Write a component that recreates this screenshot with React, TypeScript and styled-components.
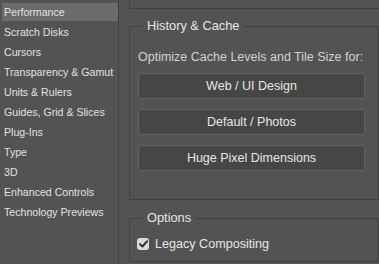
import React from "react";
import styled, { createGlobalStyle } from "styled-components";

const GlobalStyle = createGlobalStyle`
    html, body {
        margin: 0;
        padding: 0;
        background: #535353;
    }
    body {
        font-family: "Liberation Sans", Arial, sans-serif;
        color: #e4e4e4;
        overflow: hidden;
    }
`

const StyledWindow = styled.div`
    display: flex;
    width: 379px;
    height: 264px;
    background: #535353;
    overflow: hidden;
`

const StyledSidebar = styled.ul`
    list-style: none;
    margin: 0;
    padding: 3px 0 0 2px;
    width: 116px;
    border-right: 1px solid #414141;
    display: flex;
    flex-direction: column;
    gap: 2px;
`

const StyledNavItem = styled.li<{ $active?: boolean }>`
    height: 18px;
    line-height: 18px;
    padding-left: 2px;
    font-size: 10.6px;
    color: #e2e2e2;
    white-space: nowrap;
    background: ${(p) => (p.$active ? "#6b6b6b" : "transparent")};
`

const StyledMain = styled.div`
    flex: 1;
    padding-left: 10px;
    display: flex;
    flex-direction: column;
`

const StyledTopBox = styled.div`
    height: 8px;
    border-left: 1px solid #414141;
    border-bottom: 1px solid #414141;
`

const StyledGroup = styled.fieldset<{ $top: number; $bottom: number }>`
    margin: ${(p) => p.$top}px 0 0 0;
    padding: 0 14px ${(p) => p.$bottom}px 8px;
    border: 1px solid #414141;
    min-width: 0;
    width: 250px;
    box-sizing: border-box;
`

const StyledLegend = styled.legend`
    margin-left: 5px;
    padding: 0 4px;
    font-size: 12.8px;
    line-height: 16px;
    color: #e6e6e6;
`

const StyledHint = styled.div`
    margin-top: 15px;
    font-size: 12.5px;
    line-height: 16px;
    color: #d2d2d2;
    white-space: nowrap;
`

const StyledButtons = styled.div`
    margin-top: 8px;
    display: flex;
    flex-direction: column;
    gap: 10px;
`

const StyledButton = styled.button`
    height: 26px;
    width: 227px;
    box-sizing: border-box;
    border: 1px solid #636363;
    border-radius: 3px;
    background: #464646;
    color: #e6e6e6;
    font-family: "Liberation Sans", Arial, sans-serif;
    font-size: 12.5px;
    padding: 0;
`

const StyledCheckRow = styled.label`
    margin-top: 10px;
    margin-left: -1px;
    display: flex;
    align-items: center;
    gap: 6px;
    height: 16px;
    font-size: 12.6px;
    color: #e6e6e6;
`

const StyledCheckBox = styled.span`
    width: 12px;
    height: 12px;
    border-radius: 3px;
    background: #d9d9d9;
    display: flex;
    align-items: center;
    justify-content: center;
`

const navItems: string[] = [
    "Performance",
    "Scratch Disks",
    "Cursors",
    "Transparency & Gamut",
    "Units & Rulers",
    "Guides, Grid & Slices",
    "Plug-Ins",
    "Type",
    "3D",
    "Enhanced Controls",
    "Technology Previews",
];

const presets: string[] = ["Web / UI Design", "Default / Photos", "Huge Pixel Dimensions"];

const App = () => {
    return (
        <StyledWindow>
            <GlobalStyle />
            <StyledSidebar>
                {navItems.map((item, i) => (
                    <StyledNavItem key={item} $active={i === 0}>{item}</StyledNavItem>
                ))}
            </StyledSidebar>
            <StyledMain>
                <StyledTopBox />
                <StyledGroup $top={9} $bottom={28}>
                    <StyledLegend>History &amp; Cache</StyledLegend>
                    <StyledHint>Optimize Cache Levels and Tile Size for:</StyledHint>
                    <StyledButtons>
                        {presets.map((p) => (
                            <StyledButton key={p}>{p}</StyledButton>
                        ))}
                    </StyledButtons>
                </StyledGroup>
                <StyledGroup $top={10} $bottom={9}>
                    <StyledLegend>Options</StyledLegend>
                    <StyledCheckRow>
                        <StyledCheckBox>
                            <svg width="9" height="8" viewBox="0 0 9 8">
                                <path d="M1 4.2 L3.4 6.5 L8 1.3" fill="none" stroke="#2e2e2e" strokeWidth="1.9" strokeLinecap="round" strokeLinejoin="round" />
                            </svg>
                        </StyledCheckBox>
                        Legacy Compositing
                    </StyledCheckRow>
                </StyledGroup>
            </StyledMain>
        </StyledWindow>
    );
}
export default App;
